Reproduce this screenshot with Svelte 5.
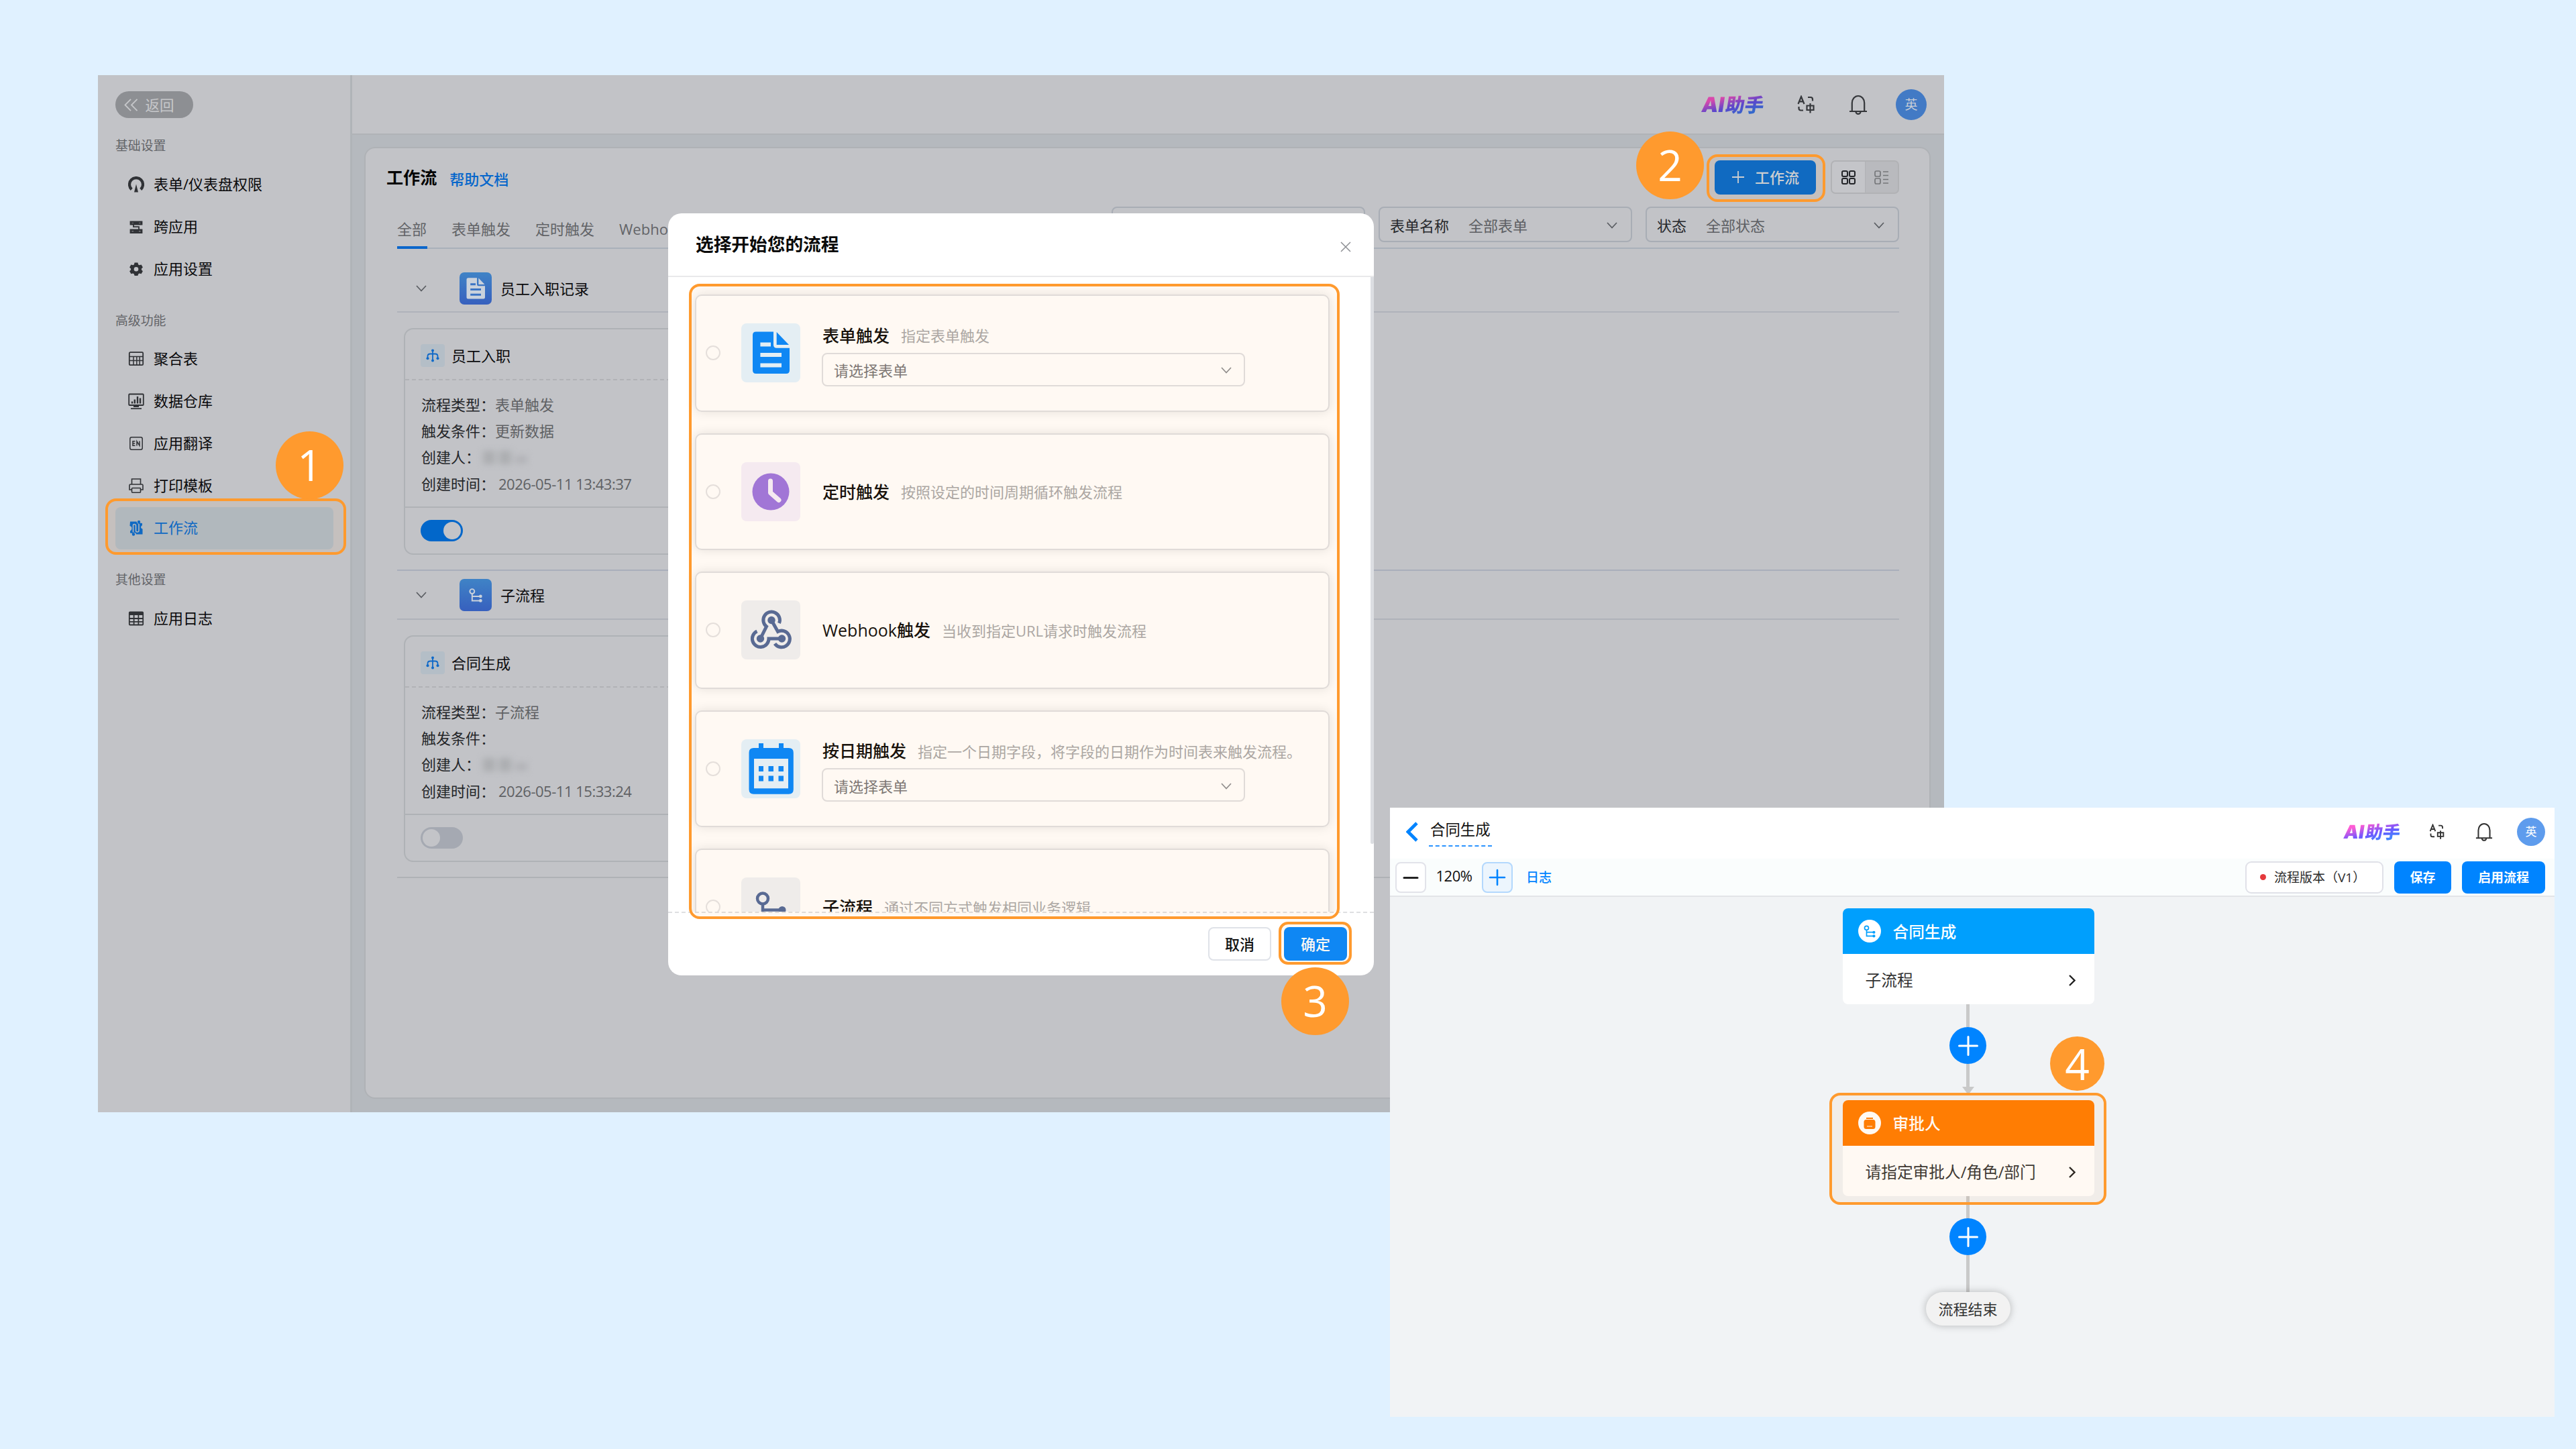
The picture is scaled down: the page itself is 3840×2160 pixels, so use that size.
<script>
  const navGroups = [
    {
      title: '基础设置',
      items: [
        { icon: 'gauge', label: '表单/仪表盘权限' },
        { icon: 'cross', label: '跨应用' },
        { icon: 'gear', label: '应用设置' }
      ]
    },
    {
      title: '高级功能',
      items: [
        { icon: 'table', label: '聚合表' },
        { icon: 'monitor', label: '数据仓库' },
        { icon: 'en', label: '应用翻译' },
        { icon: 'printer', label: '打印模板' },
        { icon: 'flow', label: '工作流', active: true }
      ]
    },
    { title: '其他设置', items: [{ icon: 'grid', label: '应用日志' }] }
  ];

  const tabs = ['全部', '表单触发', '定时触发', 'Webhook触发'];

  const groups = [
    {
      icon: 'doc',
      name: '员工入职记录',
      card: { title: '员工入职', type: '表单触发', cond: '更新数据', time: '2026-05-11 13:43:37', on: true }
    },
    {
      icon: 'sub',
      name: '子流程',
      card: { title: '合同生成', type: '子流程', cond: '', time: '2026-05-11 15:33:24', on: false }
    }
  ];

  const triggers = [
    { icon: 'doc', tone: 'blue', title: '表单触发', desc: '指定表单触发', select: true },
    { icon: 'clock', tone: 'purple', title: '定时触发', desc: '按照设定的时间周期循环触发流程' },
    { icon: 'webhook', tone: 'slate', title: 'Webhook触发', desc: '当收到指定URL请求时触发流程' },
    { icon: 'calendar', tone: 'blue', title: '按日期触发', desc: '指定一个日期字段，将字段的日期作为时间表来触发流程。', select: true },
    { icon: 'sub', tone: 'slate', title: '子流程', desc: '通过不同方式触发相同业务逻辑' }
  ];
</script>

{#snippet navIcon(name)}
  <svg class="nav-icon" viewBox="0 0 24 24" fill="none" stroke="currentColor" stroke-width="1.8">
    {#if name === 'gauge'}
      <path d="M5.2 19.4A10 10 0 1 1 18.8 19.4" stroke-width="4.2" />
      <path d="M12 11.5l3 12h-6z" fill="currentColor" stroke="none" />
    {:else if name === 'cross'}
      <path d="M4 4.8h16v3.4H4zM4 17h16v3.6H4z" stroke-width="2.8" />
      <path d="M8 6.5h8M8 18.8h8M8 8.2v4h8v5" stroke-width="1.8" />
    {:else if name === 'gear'}
      <path d="M9.600 2.600h4.800l.8 2.800 1.600.9 2.800-.7 2.300 4-2 2v1.600l2 2-2.300 4-2.800-.7-1.600.9-.8 2.600H9.600l-.8-2.600-1.600-.9-2.800.7-2.300-4 2-2v-1.600l-2-2 2.300-4 2.800.7 1.600-.9z" fill="currentColor" stroke="none" />
      <circle cx="12" cy="12.300" r="3.300" fill="#c2c3c7" stroke="none" />
    {:else if name === 'table'}
      <rect x="1.800" y="2.200" width="20.400" height="19" rx="1.500" />
      <path d="M2 8.400h20M2 14.500h20M8 8.400v12.600M12.800 8.400v12.600M17.200 8.400v12.600" stroke-width="1.500" />
    {:else if name === 'monitor'}
      <rect x="1.200" y="1.500" width="21.600" height="16.500" rx="1" />
      <path d="M6 12.500v3M9.800 9.500v6M14 5v10.500M18 7.500v8" stroke-width="2.400" />
      <path d="M8 18h8v3H8z" fill="currentColor" stroke="none" />
      <path d="M4 23.200h16" />
    {:else if name === 'en'}
      <rect x="2.800" y="2.800" width="18.400" height="18.400" rx="2.500" stroke-width="1.500" />
      <path d="M10.500 8.800H7v6.400h3.500M7 12h3.200M13 15.400V8.800l4 6.400V8.600" stroke-width="1.500" />
    {:else if name === 'printer'}
      <path d="M5.500 10V2h13v8M5.500 18H2v-6.500q0-1.500 1.500-1.500h17q1.500 0 1.500 1.500V18h-3.500" stroke-width="1.600" />
      <rect x="5.500" y="15.500" width="13" height="6.800" rx="1" stroke-width="1.600" />
    {:else if name === 'flow'}
      <path d="M3 2.500h9.500q1.500 5 4.500 2l4 .5v3q-2 1.500-2 3t2.500 2.500v8H12q-1-4-5-1.500l-4-.5v-3q2.500-1 2.500-4T2.500 9z" fill="currentColor" stroke="none" />
      <circle cx="16" cy="3" r="2.200" fill="currentColor" stroke="none" />
      <circle cx="8" cy="21.500" r="2.200" fill="currentColor" stroke="none" />
      <path d="M7.500 18.500V8q0-1.500 1.800-1.500T11.500 8v8q0 2 2.200 2T16 16V6" stroke="#adbac6" stroke-width="1.600" />
    {:else if name === 'grid'}
      <rect x="1.800" y="2.500" width="20.400" height="19" rx="1" />
      <path d="M2 5h20" stroke-width="4" />
      <path d="M2 12h20M2 16.800h20M8.600 6v15M15.400 6v15" />
    {/if}
  </svg>
{/snippet}

{#snippet docShape(hole)}
  <path d="M22 12.500h26v19.500q0 4.700 4.700 4.700H72V70q0 5-5 5H22q-5 0-5-5V17.500q0-5 5-5z" fill="currentColor" />
  <path d="M52.700 13L71 32H52.700z" fill="currentColor" />
  <path d="M28.400 31.500H44M28.400 47H60M28.400 62.500H60" stroke={hole} stroke-width="6" />
{/snippet}

{#snippet subShape()}
  <g fill="none" stroke="currentColor" stroke-width="4.500">
    <circle cx="32" cy="31.500" r="8" />
    <path d="M32 39v24.500h28M32 48.500h28" />
  </g>
  <circle cx="61" cy="48.500" r="5.500" fill="currentColor" />
  <circle cx="61" cy="63.500" r="5.500" fill="currentColor" />
{/snippet}

{#snippet chevron()}
  <svg class="chevron" viewBox="0 0 16 10" fill="none" stroke="currentColor" stroke-width="1.700"><path d="M1 1l7 7.500L15 1" /></svg>
{/snippet}

{#snippet accountBar()}
  <div class="account">
    <span class="ai"><b>AI</b>助手</span>
    <svg class="translate" viewBox="0 0 26 28" fill="none" stroke="currentColor" stroke-width="2.200">
      <path d="M1.500 13L6 2l4.500 11M3.200 9.400h5.600M16 3h4q3 0 3 3v2.500M2.500 17v2.500q0 3 3 3H9" />
      <path d="M14.500 15.500h10v6.500h-10zM19.500 12v14.500" />
    </svg>
    <svg class="bell" viewBox="0 0 28 30" fill="none" stroke="currentColor" stroke-width="2.200">
      <path d="M1 25h26M4.800 25V12.500a9.200 10.500 0 0 1 18.400 0V25M10.500 25.500a3.500 3.300 0 0 0 7 0" />
    </svg>
    <span class="avatar">英</span>
  </div>
{/snippet}

<div class="canvas">
  <section class="window admin">
    <aside class="sidebar">
      <button class="back">
        <svg viewBox="0 0 22 20" fill="none" stroke="currentColor" stroke-width="1.900"><path d="M10.500 1L1.500 10l9 9M20.500 1l-9 9 9 9" /></svg>
        返回
      </button>
      {#each navGroups as group}
        <div class="nav-group">
          <h4>{group.title}</h4>
          {#each group.items as item}
            <div class="nav-item" class:active={item.active}>
              {@render navIcon(item.icon)}
              <span>{item.label}</span>
            </div>
          {/each}
        </div>
      {/each}
    </aside>

    <div class="main">
      <header class="topbar">{@render accountBar()}</header>
      <div class="content">
        <div class="panel">
          <div class="titlebar">
            <h2>工作流</h2>
            <span class="help">帮助文档</span>
            <button class="create">
              <svg viewBox="0 0 20 20" stroke="currentColor" stroke-width="1.800"><path d="M10 1v18M1 10h18" /></svg>
              工作流
            </button>
            <div class="views">
              <span class="view on">
                <svg viewBox="0 0 21 21" fill="none" stroke="currentColor" stroke-width="2">
                  <rect x="1" y="1" width="8" height="8" rx="2" /><rect x="12" y="1" width="8" height="8" rx="2" />
                  <rect x="1" y="12" width="8" height="8" rx="2" /><rect x="12" y="12" width="8" height="8" rx="2" />
                </svg>
              </span>
              <span class="view">
                <svg viewBox="0 0 21 21" fill="none" stroke="currentColor" stroke-width="1.700">
                  <rect x="1" y="1" width="8" height="8" rx="2" /><rect x="1" y="12" width="8" height="8" rx="2" />
                  <path d="M13 2h8M13 7.500h8M13 13.500h8M13 19h8" />
                </svg>
              </span>
            </div>
          </div>

          <div class="tabrow">
            {#each tabs as tab, i}
              <span class="tab" class:current={i === 0}>{tab}</span>
            {/each}
            <div class="filters">
              <div class="filter"></div>
              <div class="filter"><span class="fl">表单名称</span><span>全部表单</span>{@render chevron()}</div>
              <div class="filter"><span class="fl">状态</span><span>全部状态</span>{@render chevron()}</div>
            </div>
          </div>

          {#each groups as group, i}
            <div class="group-head" class:follow={i > 0}>
              {@render chevron()}
              <svg class="group-icon {group.icon}" viewBox="0 0 88 88">
                {#if group.icon === 'doc'}
                  {@render docShape('#3b74c4')}
                {:else}
                  {@render subShape()}
                {/if}
              </svg>
              <span>{group.name}</span>
            </div>
            <div class="flow-card">
              <div class="card-head">
                <span class="branch">
                  <svg viewBox="0 0 20 20" fill="none" stroke="currentColor" stroke-width="1.800">
                    <path d="M10 2v16M2.500 14v-3q0-3.500 4-3.500h7q4 0 4 3.500v3" />
                    <g fill="currentColor" stroke="none"><circle cx="10" cy="2.500" r="2" /><circle cx="10" cy="17.500" r="2" /><circle cx="2.500" cy="14.200" r="2" /><circle cx="17.500" cy="14.200" r="2" /></g>
                  </svg>
                </span>
                {group.card.title}
              </div>
              <div class="card-body">
                <p><b>流程类型：</b>{group.card.type}</p>
                <p><b>触发条件：</b>{group.card.cond}</p>
                <p><b>创建人：</b><span class="masked"><i></i><i></i><i></i></span></p>
                <p><b>创建时间：</b><span class="time">{group.card.time}</span></p>
              </div>
              <div class="card-foot"><span class="switch" class:on={group.card.on}></span></div>
            </div>
          {/each}
          <div class="tail-line"></div>
        </div>
      </div>
    </div>

    <div class="dialog">
      <div class="dialog-head">
        <h3>选择开始您的流程</h3>
        <svg viewBox="0 0 16 16" fill="none" stroke="currentColor" stroke-width="1.500"><path d="M1 1l14 14M15 1L1 15" /></svg>
      </div>
      <div class="dialog-body">
        {#each triggers as t}
          <div class="trigger">
            <span class="radio"></span>
            <svg class="tile {t.tone}" viewBox="0 0 88 88">
              {#if t.icon === 'doc'}
                {@render docShape('#e3f4ff')}
              {:else if t.icon === 'clock'}
                <circle cx="44" cy="44" r="27.500" fill="currentColor" />
                <path d="M43.500 28v17.500L56 56.500" fill="none" stroke="#f5f0fc" stroke-width="7" stroke-linecap="round" stroke-linejoin="round" />
              {:else if t.icon === 'webhook'}
                <g fill="none" stroke="currentColor" stroke-width="5">
                  <path d="M56.500 34A12.300 12.300 0 1 0 37.500 39L29 56" />
                  <path d="M23.500 46A12.300 12.300 0 1 0 41 57H60" />
                  <path d="M45 29.500L54.500 46.500A12.300 12.300 0 1 1 50 64.500" />
                </g>
                <g fill="currentColor"><circle cx="45" cy="29.500" r="5.700" /><circle cx="28.500" cy="57" r="5.700" /><circle cx="60.500" cy="57" r="5.700" /></g>
              {:else if t.icon === 'calendar'}
                <path d="M26 6h7v7h23V6h7v7h7.800q7 0 7 7v54.700q0 7-7 7H18.500q-7 0-7-7V20q0-7 7-7H26z" fill="currentColor" />
                <path d="M19 29h51v44.300H19z" fill="#e3f4ff" />
                <path d="M26 44h7m7.500 0H48m7.500 0H63M26 58.500h7m7.500 0H48m7.500 0H63" stroke="currentColor" stroke-width="8" />
              {:else}
                {@render subShape()}
              {/if}
            </svg>
            <div class="info" class:tall={t.select}>
              <div class="line"><strong>{t.title}</strong><span>{t.desc}</span></div>
              {#if t.select}
                <div class="picker"><span>请选择表单</span>{@render chevron()}</div>
              {/if}
            </div>
          </div>
        {/each}
        <span class="scrollbar"></span>
      </div>
      <div class="dialog-foot">
        <button class="cancel">取消</button>
        <button class="confirm">确定</button>
      </div>
    </div>
  </section>

  <section class="window designer">
    <header class="d-head">
      <svg class="d-back" viewBox="0 0 18 30" fill="none" stroke="#0084ff" stroke-width="4.800"><path d="M16 2L3 15l13 13" /></svg>
      <span class="d-name">合同生成</span>
      {@render accountBar()}
    </header>
    <div class="d-tools">
      <span class="zoom"><svg viewBox="0 0 26 26" stroke="currentColor" stroke-width="3" stroke-linecap="round"><path d="M3 13.500h20" /></svg></span>
      <span class="percent">120%</span>
      <span class="zoom plus"><svg viewBox="0 0 26 26" stroke="currentColor" stroke-width="2.600" stroke-linecap="round"><path d="M2 13h22M13 2v22" /></svg></span>
      <span class="log">日志</span>
      <span class="version"><i></i>流程版本（V1）</span>
      <button class="save">保存</button>
      <button class="enable">启用流程</button>
    </div>
    <div class="diagram">
      <div class="node blue-node">
        <div class="node-head">
          <span class="node-icon"><svg viewBox="12 12 64 64">{@render subShape()}</svg></span>合同生成
        </div>
        <div class="node-body">子流程<svg viewBox="0 0 10 17" fill="none" stroke="currentColor" stroke-width="2.400"><path d="M1 1l7.500 7.500L1 16" /></svg></div>
      </div>
      <div class="wire w1"></div>
      <span class="add"><svg viewBox="0 0 30 30" stroke="#fff" stroke-width="3" stroke-linecap="round"><path d="M1.500 15h27M15 1.500v27" /></svg></span>
      <div class="wire w2"></div>
      <div class="arrow"></div>
      <div class="node orange-node">
        <div class="node-head">
          <span class="node-icon">
            <svg viewBox="0 0 24 24"><rect x="3.500" y="7" width="17" height="14" rx="3.500" fill="currentColor" /><path d="M7 5h10" stroke="currentColor" stroke-width="1.800" /><path d="M8 17h8" stroke="#ffd3a8" stroke-width="1.400" /></svg>
          </span>审批人
        </div>
        <div class="node-body">请指定审批人/角色/部门<svg viewBox="0 0 10 17" fill="none" stroke="currentColor" stroke-width="2.400"><path d="M1 1l7.500 7.500L1 16" /></svg></div>
      </div>
      <div class="wire w3"></div>
      <span class="add"><svg viewBox="0 0 30 30" stroke="#fff" stroke-width="3" stroke-linecap="round"><path d="M1.500 15h27M15 1.500v27" /></svg></span>
      <div class="wire w4"></div>
      <div class="end">流程结束</div>
    </div>
  </section>

  <div class="mark m-nav"></div>
  <div class="mark m-create"></div>
  <div class="mark m-list"></div>
  <div class="mark m-confirm"></div>
  <div class="mark m-node"></div>
  <span class="step s1">1</span>
  <span class="step s2">2</span>
  <span class="step s3">3</span>
  <span class="step s4">4</span>
</div>

<style>
  :global(body) { margin: 0; }
  .canvas, .canvas :global(*) { box-sizing: border-box; }
  .canvas {
    position: relative;
    width: 3840px;
    height: 2160px;
    overflow: hidden;
    background: #e0f1ff;
    font-family: 'Open Sans', 'Noto Sans CJK SC', sans-serif;
    font-size: 22px;
    line-height: 30px;
    color: #111;
    white-space: nowrap;
  }
  h2, h3, h4, p { margin: 0; }
  button { border: 0; padding: 0; font: inherit; display: flex; align-items: center; justify-content: center; }
  svg { display: block; flex: none; }

  .window { position: absolute; overflow: hidden; }
  .admin { left: 146px; top: 112px; width: 2752px; height: 1546px; display: flex; background: #c2c3c7; }

  /* sidebar */
  .sidebar { width: 379px; border-right: 3px solid #b0b4b8; padding: 24px 25px 0 26px; }
  .back { width: 116px; height: 40px; gap: 10px; padding: 1px 15px 0 0; border-radius: 20px; background: #8d8f93; color: #c6c7ca; font-size: 21.500px; }
  .back svg { width: 21px; height: 19px; }
  .nav-group { margin-bottom: 18.500px; }
  .back + .nav-group { margin-top: 14px; }
  h4 { height: 53px; line-height: 54px; font-size: 18.860px; font-weight: 400; color: #626468; }
  .nav-item { height: 63px; display: flex; align-items: center; gap: 14px; padding-left: 19px; border-radius: 8px; color: #303236; }
  .nav-item span { color: #0a0a0c; padding-bottom: 2px; }
  .nav-item.active { background: #adbac6; color: #0066cc; }
  .nav-item.active span { color: #0066cc; }
  .nav-icon { width: 24px; height: 24px; }

  /* main area */
  .main { flex: 1; display: flex; flex-direction: column; }
  .topbar { height: 89px; border-bottom: 2px solid #b0b3b7; display: flex; justify-content: flex-end; align-items: center; padding-right: 26px; }
  .content { flex: 1; background: #b5b9be; padding: 18px 20px 20px 18px; display: flex; }
  .panel { flex: 1; border: 2px solid #afb2b6; border-radius: 16px; background: #c2c3c7; padding: 18px 45px 0 47px; }

  .account { display: flex; align-items: center; color: #35373b; }
  .ai {
    display: flex;
    align-items: center;
    font-size: 28.500px;
    line-height: 36px;
    font-weight: 900;
    transform: skewX(-9deg);
    color: transparent;
    background: linear-gradient(165deg, #d848ac 25%, #5b46cc 55%, #3468cc 80%);
    background-clip: text;
    -webkit-background-clip: text;
    margin-right: 49px;
  }
  .ai b { font-family: Inter, sans-serif; font-weight: 900; font-size: 31px; margin-right: 2px; }
  .translate { width: 26px; height: 28px; margin-right: 51px; }
  .bell { width: 28px; height: 30px; margin-right: 42px; }
  .avatar { width: 46px; height: 46px; border-radius: 50%; background: #427ac5; color: #c8cdd6; font-size: 19px; display: flex; align-items: center; justify-content: center; }

  .titlebar { display: flex; align-items: center; height: 50px; margin-left: -16px; }
  h2 { font-size: 25.100px; font-weight: 700; color: #050505; }
  .help { margin-left: 19px; padding-top: 6px; font-weight: 500; color: #0566cb; }
  .create { margin-left: auto; width: 151px; height: 51px; border-radius: 8px; background: #0268ca; color: #cad2da; font-weight: 500; gap: 15px; }
  .create svg { width: 20px; height: 20px; }
  .views { display: flex; margin-left: 22px; width: 102px; height: 50px; border: 2px solid #b1b2b5; border-radius: 7px; background: #b9babe; overflow: hidden; }
  .view { flex: 1; display: flex; align-items: center; justify-content: center; color: #75777a; }
  .view.on { background: #c4c5c9; color: #222428; border-right: 1px solid #b1b2b5; }
  .view svg { width: 21px; height: 21px; }

  .tabrow { display: flex; margin-top: 19px; height: 63px; border-bottom: 2px solid #a9b1ba; gap: 36px; }
  .tab { height: 63px; padding: 5px 1px 0 0; line-height: 56px; color: #626467; border-bottom: 4px solid transparent; }
  .tab.current { border-bottom-color: #0b66cb; }
  .filters { margin-left: auto; display: flex; gap: 20px; }
  .filter { width: 378px; height: 53px; border: 2px solid #a8adb5; border-radius: 8px; display: flex; align-items: center; padding: 3px 20px 0 15px; color: #5d5f63; }
  .filter .fl { color: #26282b; margin-right: 29px; }
  .chevron { width: 16px; height: 10px; color: #5a5d62; }
  .filter .chevron { margin-left: auto; }

  .group-head { display: flex; align-items: center; height: 95px; padding: 24px 0 0 28px; border-bottom: 2px solid #afb2ba; color: #0c0c0e; }
  .group-head.follow { height: 75px; padding-top: 1px; border-top: 2px solid #a9aebb; }
  .group-icon { width: 48px; height: 48px; margin: 0 13px 0 49px; padding: 2px; border-radius: 7px; background: linear-gradient(#3f83c6, #3760be); color: #cad2dc; }
  .group-icon.sub { padding: 5px; }
  .flow-card { margin: 23px 0 22px 10px; height: 338px; width: 700px; border: 2px solid #afb2b6; border-radius: 14px; }
  .card-head { height: 76px; border-bottom: 2px dashed #b1b2b6; display: flex; align-items: center; padding: 3px 0 0 23px; gap: 10px; color: #0c0c0e; }
  .branch { width: 36px; height: 34px; border-radius: 4px; background: #b4bec7; color: #0f69c8; display: flex; align-items: center; justify-content: center; }
  .branch svg { width: 20px; height: 20px; }
  .card-body { height: 190px; padding: 17px 0 0 24px; border-bottom: 2px solid #afb2b6; }
  .card-body p { height: 39.200px; line-height: 39.200px; color: #5f6164; display: flex; }
  .card-body b { font-weight: 400; color: #242629; }
  .time { margin-left: 5px; letter-spacing: -0.480px; }
  .masked { display: flex; align-items: center; gap: 6px; margin-left: 4px; filter: blur(5px); }
  .masked i { width: 18px; height: 20px; background: #acaeb1; }
  .masked i:last-child { height: 12px; margin-top: 6px; background: #b2b3b7; }
  .card-foot { height: 68px; display: flex; align-items: center; padding-left: 23px; }
  .switch { width: 63px; height: 32px; border-radius: 16px; background: #a5a9b2; padding: 3px; display: flex; }
  .switch::before { content: ''; width: 26px; height: 26px; border-radius: 50%; background: #c3c4c8; }
  .switch.on { background: #0267ca; justify-content: flex-end; }
  .tail-line { height: 2px; background: #afb2b6; }

  /* dialog */
  .dialog { position: absolute; left: 850px; top: 206px; width: 1052px; height: 1136px; border-radius: 20px; background: #fff; display: flex; flex-direction: column; overflow: hidden; }
  .dialog-head { height: 95px; border-bottom: 2px solid #e9e9eb; display: flex; justify-content: space-between; padding: 31px 34px 0 41px; color: #8d8f94; }
  h3 { font-size: 26.700px; line-height: 30px; font-weight: 700; color: #0a0a0a; }
  .dialog-head svg { width: 16px; height: 16px; margin-top: 11px; }
  .dialog-body { position: relative; flex: 1; overflow: hidden; display: flex; flex-direction: column; gap: 32px; padding: 26px 66px 0 40px; }
  .scrollbar { position: absolute; right: 0; top: 0; width: 5px; height: 845px; background: #dcdee2; border-radius: 0 0 3px 3px; }
  .trigger { flex: none; height: 174.500px; border: 2px solid #dfe0e3; border-radius: 10px; background: #fff; box-shadow: 0 0 16px rgba(0, 0, 0, 0.100); display: flex; align-items: center; padding-left: 14px; }
  .radio { width: 22px; height: 22px; border: 2px solid #e4e4e6; border-radius: 50%; }
  .tile { width: 88px; height: 88px; border-radius: 8px; margin: 0 33px 0 31px; }
  .tile.blue { background: #e3f4ff; color: #0186ff; }
  .tile.purple { background: #f5f0fc; color: #9c74e1; }
  .tile.slate { background: #eff2f6; color: #4f689a; }
  .info.tall { padding-top: 5px; }
  .line { display: flex; align-items: center; height: 36px; gap: 17px; }
  .line strong { font-size: 25px; font-weight: 500; color: #0a0a0a; }
  .line span { color: #a7a8aa; padding-top: 1px; }
  .picker { margin: 8px 0 0 -1px; width: 631px; height: 50px; border: 2px solid #dfe0e3; border-radius: 8px; display: flex; align-items: center; justify-content: space-between; padding: 3px 18px 0 16px; color: #767679; }
  .picker .chevron { color: #8b8d92; }
  .dialog-foot { height: 95px; border-top: 2px dashed #dedfe1; display: flex; justify-content: flex-end; gap: 19px; padding: 21px 40px 0 0; }
  .dialog-foot button { width: 94px; height: 50px; border-radius: 8px; font-weight: 500; }
  .cancel { border: 2px solid #dfe2e8; background: #fff; color: #111; }
  .confirm { background: #0186ff; color: #fff; }

  /* designer window */
  .designer { left: 2072px; top: 1204px; width: 1736px; height: 908px; background: #f1f3f5; display: flex; flex-direction: column; }
  .d-head { height: 76px; background: #fff; display: flex; align-items: center; padding: 0 14px 6px 24px; }
  .d-back { width: 18px; height: 30px; margin: 1px 0 0; }
  .d-name { margin-left: 16px; padding: 0 2px; height: 43px; line-height: 35px; font-size: 22.400px; border-bottom: 2px dashed #2b93ff; margin-top: 2px; }
  .d-head .account { margin-left: auto; color: #333; padding-top: 2px; }
  .d-head .ai { font-size: 26px; margin-right: 43px; background-image: linear-gradient(165deg, #ff5cd4 25%, #7057ff 55%, #3f86ff 80%); }
  .d-head .ai b { font-size: 28px; }
  .d-head .translate { width: 23px; height: 24px; margin-right: 46px; }
  .d-head .bell { width: 26px; height: 28px; margin-right: 36px; }
  .d-head .avatar { width: 42px; height: 42px; background: #5e9ced; color: #fff; font-size: 17px; }
  .d-tools { height: 57px; background: #fafdfd; border-bottom: 2px solid #e3e5e8; display: flex; align-items: center; padding: 0 14px 0 8px; font-size: 19px; }
  .zoom { width: 46px; height: 46px; border: 2px solid #e2e3ea; border-radius: 8px; background: #fff; color: #222; display: flex; align-items: center; justify-content: center; }
  .zoom.plus { background: #ecf5fd; border-color: #b3d8fd; color: #0084ff; }
  .zoom svg { width: 26px; height: 26px; }
  .percent { width: 83px; text-align: center; font-size: 22px; letter-spacing: -0.500px; padding-bottom: 5px; }
  .log { margin-left: 20px; color: #0084ff; font-weight: 500; }
  .version { margin-left: auto; width: 206px; height: 48px; border: 2px solid #e0e1e8; border-radius: 9px; background: #fff; display: flex; align-items: center; padding-left: 20px; color: #2b2b2b; }
  .version i { width: 9px; height: 9px; border-radius: 50%; background: #e5393c; margin-right: 12px; }
  .d-tools button { height: 48px; border-radius: 8px; background: #0084ff; color: #fff; font-weight: 700; }
  .d-tools .save { width: 85px; margin: 0 16px; }
  .d-tools .enable { width: 124px; }

  .diagram { display: flex; flex-direction: column; align-items: center; padding-top: 17px; padding-right: 13px; font-size: 23.700px; }
  .node { width: 375px; height: 143px; border-radius: 8px; overflow: hidden; background: #fff; margin-left: 1px; }
  .node-head { height: 68px; display: flex; align-items: center; gap: 18px; padding: 2px 0 0 23px; color: #fff; font-weight: 500; }
  .blue-node .node-head { background: #009ffd; }
  .orange-node .node-head { background: #ff7c00; }
  .node-icon { width: 34px; height: 34px; margin-top: -2px; border-radius: 50%; background: #fff; display: flex; align-items: center; justify-content: center; color: #009ffd; }
  .orange-node .node-icon { color: #ff7c00; }
  .node-icon svg { width: 24px; height: 24px; }
  .node-body { height: 75px; display: flex; align-items: center; justify-content: space-between; padding: 3px 28px 0 34px; color: #333; }
  .node-body svg { width: 10px; height: 17px; color: #222; }
  .wire { width: 5px; background: #c9c9c9; }
  .w1 { height: 34px; }
  .w2 { height: 34px; }
  .w3 { height: 33px; }
  .w4 { height: 55px; }
  .add { width: 55px; height: 55px; border-radius: 50%; background: #0084ff; display: flex; align-items: center; justify-content: center; }
  .add svg { width: 30px; height: 30px; }
  .arrow { border: 9px solid transparent; border-top: 12px solid #c9c9c9; border-bottom: 0; margin-bottom: 8px; }
  .end { width: 126px; height: 50px; border-radius: 25px; background: #f2f2f2; box-shadow: 0 0 12px rgba(0, 0, 0, 0.250); font-size: 22px; line-height: 51px; text-align: center; color: #333; }

  /* annotations */
  .mark { position: absolute; border: 4px solid #ff9a2e; border-radius: 16px; background: rgba(255, 154, 46, 0.060); }
  .m-nav { left: 157px; top: 743px; width: 359px; height: 84px; }
  .m-create { left: 2544px; top: 230px; width: 177px; height: 71px; }
  .m-list { left: 1027px; top: 423px; width: 970px; height: 947px; }
  .m-confirm { left: 1906px; top: 1374px; width: 109px; height: 64px; border-radius: 14px; }
  .m-node { left: 2727px; top: 1629px; width: 413px; height: 167px; }
  .step { position: absolute; width: 101px; height: 101px; border-radius: 50%; background: #ff9a2e; color: #fff; font-size: 64px; line-height: 99px; text-align: center; }
  .s1 { left: 411px; top: 643px; }
  .s2 { left: 2439px; top: 196px; }
  .s3 { left: 1910px; top: 1442px; }
  .s4 { left: 3056px; top: 1545px; width: 81px; height: 81px; line-height: 81px; }
</style>
